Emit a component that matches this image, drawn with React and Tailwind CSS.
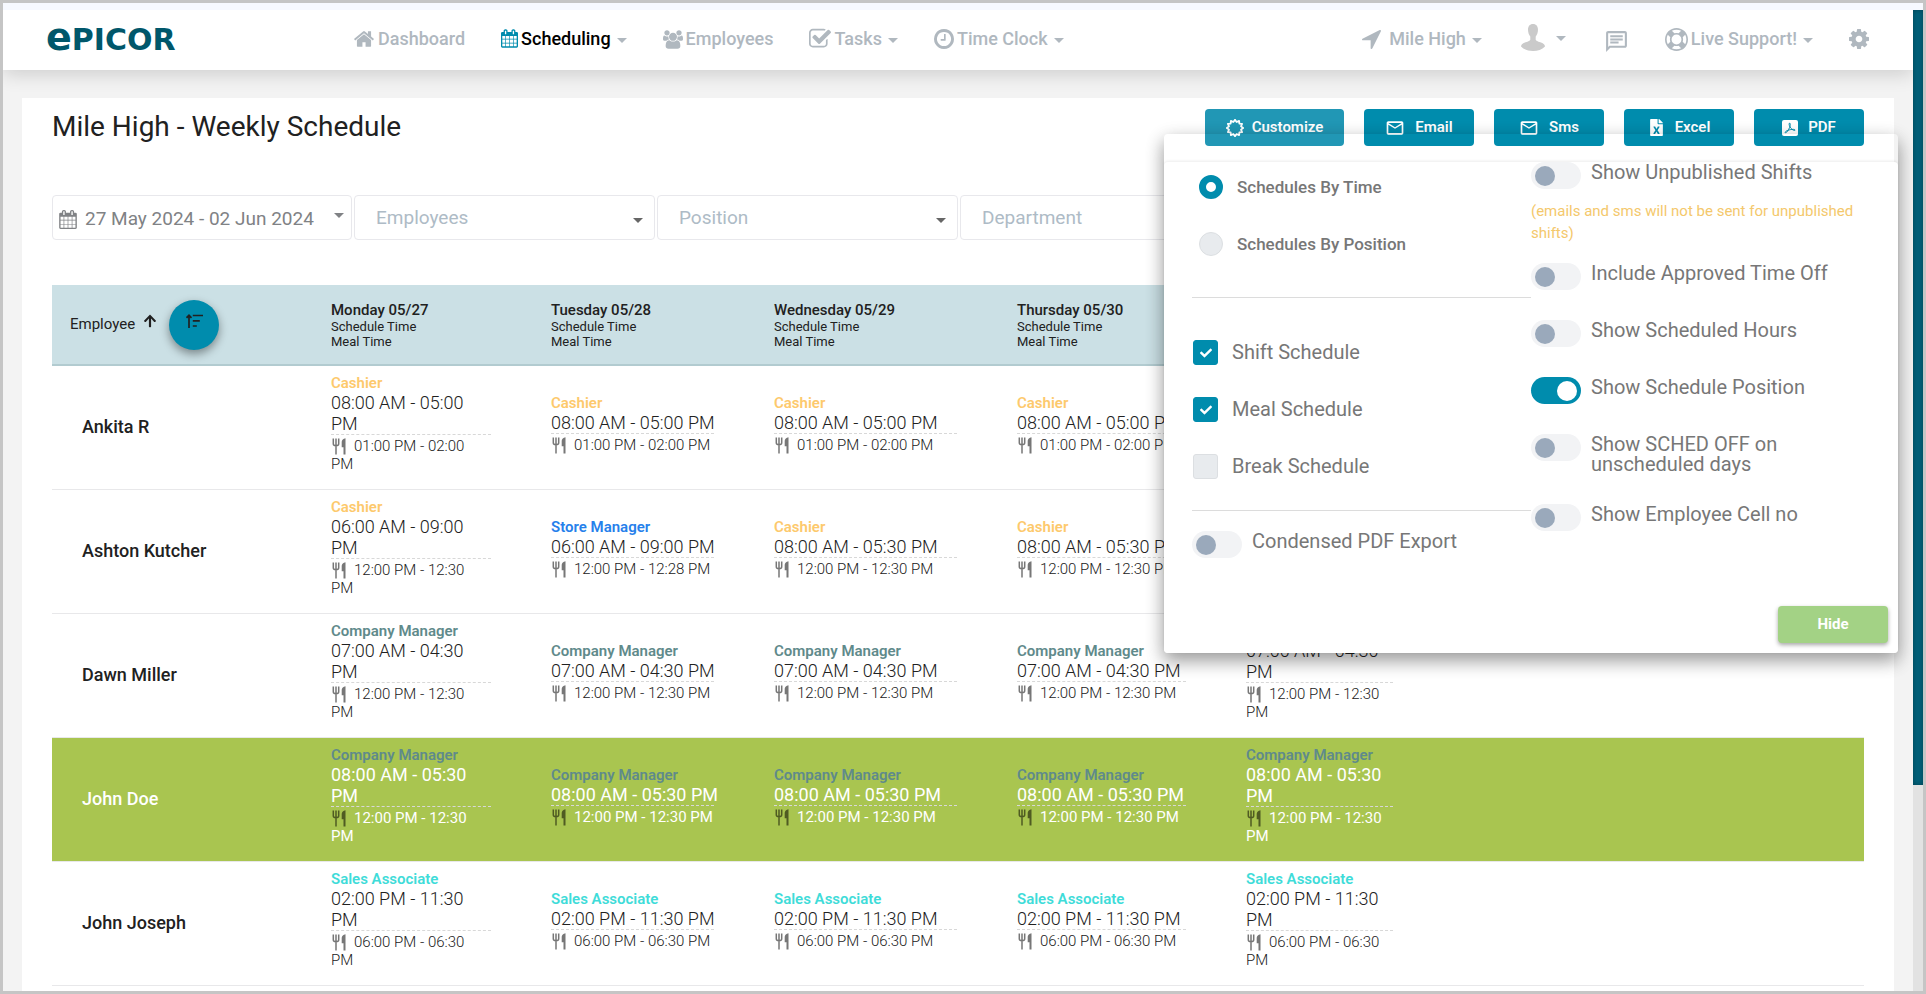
import { MdMailOutline, MdOutlineChat } from 'react-icons/md';
import { FaArrowUp, FaCheck, FaFileExcel } from 'react-icons/fa';

const ICONS = {
  home: {
    box: '0 0 1792 1792',
    d: 'M1472 992v480q0 26-19 45t-45 19h-384v-384h-256v384h-384q-26 0-45-19t-19-45v-480q0-1 .5-3t.5-3l575-474 575 474q1 2 1 6zm223-69l-62 74q-8 9-21 11h-3q-13 0-21-7l-692-577-692 577q-12 8-24 7-13-2-21-11l-62-74q-8-10-7-23.500t11-21.500l719-599q32-26 76-26t76 26l244 204v-195q0-14 9-23t23-9h192q14 0 23 9t9 23v408l219 182q10 8 11 21.500t-7 23.500z',
  },
  calendar: {
    box: '64 0 1664 1792',
    d: 'M192 1664h288v-288h-288v288zm352 0h320v-288h-320v288zm-352-352h288v-320h-288v320zm352 0h320v-320h-320v320zm-352-384h288v-288h-288v288zm736 736h320v-288h-320v288zm-384-736h320v-288h-320v288zm768 736h288v-288h-288v288zm-384-352h320v-320h-320v320zm-352-864v-288q0-13-9.500-22.500t-22.500-9.500h-64q-13 0-22.500 9.500t-9.500 22.500v288q0 13 9.500 22.500t22.500 9.500h64q13 0 22.500-9.500t9.500-22.500zm736 864h288v-320h-288v320zm-384-384h320v-288h-320v288zm384 0h288v-288h-288v288zm32-480v-288q0-13-9.500-22.500t-22.500-9.500h-64q-13 0-22.500 9.500t-9.500 22.500v288q0 13 9.500 22.500t22.500 9.500h64q13 0 22.500-9.500t9.500-22.500zm384-64v1280q0 52-38 90t-90 38h-1408q-52 0-90-38t-38-90v-1280q0-52 38-90t90-38h128v-96q0-66 47-113t113-47h64q66 0 113 47t47 113v96h384v-96q0-66 47-113t113-47h64q66 0 113 47t47 113v96h128q52 0 90 38t38 90z',
  },
  users: {
    box: '0 0 1920 1792',
    d: 'M593 896q-162 5-265 128h-134q-82 0-138-40.500t-56-118.500q0-353 124-353 6 0 43.500 21t97.500 42.500 119 21.500q67 0 133-23-5 37-5 66 0 139 81 256zm1071 637q0 120-73 189.500t-194 69.500h-874q-121 0-194-69.500t-73-189.500q0-53 3.500-103.500t14-109 26.500-108.500 43-97.500 62-81 85.500-53.500 111.500-20q10 0 43 21.500t73 48 107 48 135 21.500 135-21.500 107-48 73-48 43-21.500q61 0 111.500 20t85.500 53.500 62 81 43 97.500 26.500 108.500 14 109 3.500 103.500zm-1024-1277q0 106-75 181t-181 75-181-75-75-181 75-181 181-75 181 75 75 181zm704 384q0 159-112.500 271.500t-271.500 112.500-271.500-112.500-112.500-271.500 112.500-271.500 271.500-112.500 271.500 112.500 112.500 271.500zm576 225q0 78-56 118.500t-138 40.500h-134q-103-123-265-128 81-117 81-256 0-29-5-66 66 23 133 23 59 0 119-21.500t97.500-42.500 43.500-21q124 0 124 353zm-128-609q0 106-75 181t-181 75-181-75-75-181 75-181 181-75 181 75 75 181z',
  },
  check: {
    box: '64 64 1664 1664',
    d: 'M1472 930v318q0 119-84.500 203.500t-203.500 84.500h-832q-119 0-203.500-84.500t-84.500-203.500v-832q0-119 84.500-203.500t203.500-84.500h832q63 0 117 25 15 7 18 23 3 17-9 29l-49 49q-10 10-23 10-3 0-9-2-23-6-45-6h-832q-66 0-113 47t-47 113v832q0 66 47 113t113 47h832q66 0 113-47t47-113v-254q0-13 9-22l64-64q10-10 23-10 6 0 12 3 20 8 20 29zm231-489l-814 814q-24 24-57 24t-57-24l-430-430q-24-24-24-57t24-57l110-110q24-24 57-24t57 24l263 263 647-647q24-24 57-24t57 24l110 110q24 24 24 57t-24 57z',
  },
  clock: {
    box: '128 128 1536 1536',
    d: 'M1024 544v448q0 14-9 23t-23 9h-320q-14 0-23-9t-9-23v-64q0-14 9-23t23-9h224v-352q0-14 9-23t23-9h64q14 0 23 9t9 23zm416 352q0-148-73-273t-198-198-273-73-273 73-198 198-73 273 73 273 198 198 273 73 273-73 198-198 73-273zm224 0q0 209-103 385.500t-279.500 279.500-385.500 103-385.500-103-279.500-279.500-103-385.500 103-385.500 279.500-279.500 385.500-103 385.500 103 279.500 279.500 103 385.500z',
  },
  arrow: {
    box: '192 256 1408 1408',
    d: 'M1593 349l-640 1280q-17 35-57 35-5 0-15-2-22-5-35.500-22.500t-13.500-39.500v-576h-576q-22 0-39.500-13.500t-22.500-35.500 4-42 29-30l1280-640q13-7 29-7 27 0 45 19 15 14 18.500 34.500t-6.500 39.500z',
  },
  lifebuoy: {
    box: '0 0 1792 1792',
    d: 'M896 0q182 0 348 71t286 191 191 286 71 348-71 348-191 286-286 191-348 71-348-71-286-191-191-286-71-348 71-348 191-286 286-191 348-71zm0 128q-190 0-361 90l194 194q82-28 167-28t167 28l194-194q-171-90-361-90zm-678 1129l194-194q-28-82-28-167t28-167l-194-194q-90 171-90 361t90 361zm678 407q190 0 361-90l-194-194q-82 28-167 28t-167-28l-194 194q171 90 361 90zm0-384q159 0 271.500-112.500t112.500-271.500-112.500-271.500-271.500-112.500-271.500 112.500-112.500 271.500 112.500 271.500 271.500 112.500zm484-217l194 194q90-171 90-361t-90-361l-194 194q28 82 28 167t-28 167z',
  },
  cog: {
    box: '128 128 1536 1536',
    d: 'M1152 896q0-106-75-181t-181-75-181 75-75 181 75 181 181 75 181-75 75-181zm512-109v222q0 12-8 23t-20 13l-185 28q-19 54-39 91 35 50 107 138 10 12 10 25t-9 23q-27 37-99 108t-94 71q-12 0-26-9l-138-108q-44 23-91 38-16 136-29 186-7 28-36 28h-222q-14 0-24.500-8.500t-11.500-21.500l-28-184q-49-16-90-37l-141 107q-10 9-25 9-14 0-25-11-126-114-165-168-7-10-7-23 0-12 8-23 15-21 51-66.500t54-70.500q-27-50-41-99l-183-27q-13-2-21-12.500t-8-23.500v-222q0-12 8-23t19-13l186-28q14-46 39-92-40-57-107-138-10-12-10-24 0-10 9-23 26-36 98.500-107.500t94.500-71.500q13 0 26 10l138 107q44-23 91-38 16-136 29-186 7-28 36-28h222q14 0 24.500 8.500t11.500 21.500l28 184q49 16 90 37l142-107q9-9 24-9 13 0 25 10 129 119 165 170 7 8 7 22 0 12-8 23-15 21-51 66.500t-54 70.500q26 50 41 98l183 28q13 2 21 12.500t8 23.500z',
  },
};

function Icon({ name, className }) {
  const { box, d } = ICONS[name];
  return (
    <svg viewBox={box} className={className} fill="currentColor" aria-hidden="true">
      <path d={d} />
    </svg>
  );
}

function Caret({ className = '' }) {
  return (
    <svg viewBox="0 0 10 5" className={`w-[10px] h-[5px] shrink-0 ${className}`} fill="currentColor" aria-hidden="true">
      <path d="M0 0h10L5 5z" />
    </svg>
  );
}

function Cutlery({ className = '' }) {
  return (
    <svg viewBox="0 0 16 17" className={`inline-block w-4 h-[17px] mr-[7px] align-bottom ${className}`} aria-hidden="true">
      <path d="M2.3 0.5v5.2q0 2 2.7 2t2.700-2V0.500M5 0.500v16" fill="none" stroke="currentColor" strokeWidth="1.500" />
      <path d="M14.500 0.300v16.200h-2V9.300h-1.800V3.800Q11 0.800 14.500 0.300z" fill="currentColor" />
    </svg>
  );
}

// scalloped ring on the Customize button
const BURST = Array.from({ length: 24 }, (_, i) => {
  const r = i % 2 ? 7.6 : 10;
  const a = (i * Math.PI) / 12;
  return `${(12 + r * Math.sin(a)).toFixed(2)},${(12 - r * Math.cos(a)).toFixed(2)}`;
}).join(' ');

function BurstIcon() {
  return (
    <svg viewBox="1 1 22 22" className="size-[18px]" fill="none" stroke="currentColor" strokeWidth="2.2" strokeLinejoin="round" aria-hidden="true">
      <polygon points={BURST} />
    </svg>
  );
}

function PdfIcon() {
  return (
    <svg viewBox="0 0 16 16" className="size-4" aria-hidden="true">
      <rect width="16" height="16" rx="2" fill="#fff" />
      <path
        d="M7.300 3.200c1.300-.5 1.200 2.300.3 4.300C6.500 10 4.700 13 3.400 12.800c-1.200-.6 1.600-2.500 4.200-3 2.600-.6 5.600-.7 5.500.3-.3 1-2.700-.2-4-1.700C7.600 6.800 6.700 4.300 7.300 3.200z"
        fill="none"
        stroke="#008cad"
        strokeWidth="1"
      />
    </svg>
  );
}

function Avatar() {
  return (
    <svg viewBox="0 0 26 28" className="w-[26px] h-7" fill="#cacaca" aria-hidden="true">
      <path d="M13 1c3.300 0 5 2.300 5 5.800 0 3-1.100 5.300-2.300 6.600v3.400c.3 1.200 2 1.600 4.600 2.500 3 1 4.500 2.200 4.700 4.200C22 26.500 17.800 28 13 28S4 26.500 1 23.500c.2-2 1.700-3.200 4.700-4.200 2.600-.9 4.300-1.300 4.600-2.500v-3.400C9.100 12.100 8 9.800 8 6.800 8 3.300 9.700 1 13 1z" />
    </svg>
  );
}

function NavLink({ icon, iconClass, label, caret, active }) {
  return (
    <a href="#" className={`flex items-center text-lg font-medium ${active ? 'text-black' : 'text-[#b0b8bf]'}`}>
      <Icon name={icon} className={iconClass} />
      {label}
      {caret && <Caret className="ml-1.5 mt-0.5 text-[#b0b8bf]" />}
    </a>
  );
}

function Header() {
  return (
    <header className="relative z-10 flex h-[60px] shrink-0 items-center bg-white pb-0.5 pl-[43px] pr-11 shadow-[0_4px_18px_rgba(0,0,0,0.16)]">
      <a href="#" className="flex w-[307px] items-baseline pb-1 font-['DejaVu_Sans'] font-bold leading-none text-[#00576b]">
        <span className="text-[38px] leading-none">e</span>
        <span className="text-[30px] leading-none">PICOR</span>
      </a>
      <nav className="flex items-center gap-9">
        <NavLink icon="home" iconClass="mr-[3px] size-[22px]" label="Dashboard" />
        <NavLink icon="calendar" iconClass="mr-[3px] mb-0.5 w-[17px] h-[19px] text-[#008cad]" label="Scheduling" caret active />
        <NavLink icon="users" iconClass="mr-[3px] w-5 h-[19px]" label="Employees" />
        <NavLink icon="check" iconClass="mr-[3px] size-[22px]" label="Tasks" caret />
        <NavLink icon="clock" iconClass="mr-[3px] size-5" label="Time Clock" caret />
      </nav>
      <div className="ml-auto flex items-center gap-9">
        <NavLink icon="arrow" iconClass="mr-2 size-[19px]" label="Mile High" caret />
        <button type="button" aria-label="Account" className="flex items-center gap-2.5 pb-1 px-0.5 text-[#b0b8bf]">
          <Avatar />
          <Caret className="mt-0.5" />
        </button>
        <button type="button" aria-label="Messages" className="pt-1 text-[#b0b8bf]">
          <MdOutlineChat className="size-[25px]" />
        </button>
        <NavLink icon="lifebuoy" iconClass="mr-[3px] size-[23px]" label="Live Support!" caret />
        <button type="button" aria-label="Settings" className="text-[#b0b8bf]">
          <Icon name="cog" className="size-5" />
        </button>
      </div>
    </header>
  );
}

function ToolButton({ icon, children, wide, light }) {
  return (
    <button
      type="button"
      className={`flex h-[37px] items-center justify-center rounded text-[15px] font-semibold text-white ${wide ? 'w-[139px] gap-2' : 'w-[110px] gap-2.5'} ${light ? 'bg-[#2197b5]' : 'bg-[#008cad]'}`}
    >
      {icon}
      {children}
    </button>
  );
}

function Toggle({ label, checked }) {
  return (
    <label className="flex items-start gap-2.5 text-xl leading-5 text-[#777]">
      <input
        type="checkbox"
        defaultChecked={checked}
        className="flex h-[27px] w-[50px] shrink-0 appearance-none items-center rounded-full bg-[#f2f3f5] px-1 before:size-5 before:rounded-full before:bg-[#9aa9bb] before:content-[''] checked:bg-[#008cad] checked:before:ml-auto checked:before:bg-white"
      />
      <span className="whitespace-pre-line">{label}</span>
    </label>
  );
}

function Radio({ label, checked }) {
  return (
    <label className="flex items-center gap-3.5 text-[17px] font-medium leading-6 text-[#777]">
      <input
        type="radio"
        name="group-by"
        defaultChecked={checked}
        className="size-6 shrink-0 appearance-none rounded-full border border-[#dcdfe2] bg-[#e8ebee] checked:border-[7px] checked:border-[#008cad] checked:bg-white"
      />
      {label}
    </label>
  );
}

function Check({ label, checked }) {
  return (
    <label className="flex items-center gap-3.5 text-xl leading-[25px] text-[#777]">
      <span className="relative size-[25px] shrink-0">
        <input
          type="checkbox"
          defaultChecked={checked}
          className="peer block size-[25px] appearance-none rounded-[3px] border border-[#dcdfe2] bg-[#e8ebee] checked:border-[#008cad] checked:bg-[#008cad]"
        />
        <FaCheck className="pointer-events-none absolute inset-0 m-auto hidden size-3 text-white peer-checked:block" />
      </span>
      {label}
    </label>
  );
}

function CustomizePanel() {
  return (
    <div className="pointer-events-none absolute -right-[34px] top-[25px] z-20 w-[734px] rounded pt-7 shadow-[0_8px_17px_rgba(0,0,0,0.25),0_6px_20px_rgba(0,0,0,0.2)]">
      <div className="pointer-events-auto rounded bg-white pb-2.5 shadow-[0_-1px_3px_rgba(0,0,0,0.08)]">
        <div className="grid grid-cols-2 px-7">
          <div>
            <div className="flex flex-col gap-[33px] border-b border-[#dcdcdc] pb-[41px] pl-[7px] pt-[13px]">
              <Radio label="Schedules By Time" checked />
              <Radio label="Schedules By Position" />
            </div>
            <div className="flex flex-col gap-8 border-b border-[#dcdcdc] pb-[31px] pl-px pt-[42px]">
              <Check label="Shift Schedule" checked />
              <Check label="Meal Schedule" checked />
              <Check label="Break Schedule" />
            </div>
            <div className="pt-5">
              <Toggle label="Condensed PDF Export" />
            </div>
          </div>
          <div className="flex flex-col gap-[30px]">
            <div>
              <Toggle label="Show Unpublished Shifts" />
              <p className="mb-[-11px] mt-[11px] text-[15px] leading-[22px] text-[#f4c86c]">
                (emails and sms will not be sent for unpublished shifts)
              </p>
            </div>
            <Toggle label="Include Approved Time Off" />
            <Toggle label="Show Scheduled Hours" />
            <Toggle label="Show Schedule Position" checked />
            <Toggle label={'Show SCHED OFF on\nunscheduled days'} />
            <Toggle label="Show Employee Cell no" />
          </div>
        </div>
        <div className="flex justify-end pr-2.5 pt-12">
          <button
            type="button"
            className="h-[37px] w-[110px] rounded bg-[#a3d285] text-[15px] font-bold text-white shadow-[0_2px_4px_rgba(0,0,0,0.35)]"
          >
            Hide
          </button>
        </div>
      </div>
    </div>
  );
}

function FilterSelect({ label }) {
  return (
    <div className="relative w-[301px] shrink-0">
      <select
        aria-label={label}
        className="h-[45px] w-full appearance-none rounded border border-[#e8e8ec] bg-white pl-[21px] pt-0.5 text-[19px] text-[#aebbc6]"
      >
        <option>{label}</option>
      </select>
      <Caret className="pointer-events-none absolute bottom-[17px] right-3 w-3 h-1.5 text-[#666]" />
    </div>
  );
}

const ROLE_COLORS = {
  Cashier: 'text-[#fdc96c]',
  'Store Manager': 'text-[#2680eb]',
  'Company Manager': 'text-[#5f8a8b]',
  'Sales Associate': 'text-[#3fdcd9]',
};

const DAYS = ['Monday 05/27', 'Tuesday 05/28', 'Wednesday 05/29', 'Thursday 05/30'];

const NARROW = [0, 4];

const cashier = { role: 'Cashier', shift: '08:00 AM - 05:00 PM', meal: '01:00 PM - 02:00 PM' };
const cashierLate = { role: 'Cashier', shift: '08:00 AM - 05:30 PM', meal: '12:00 PM - 12:30 PM' };
const dawn = { role: 'Company Manager', shift: '07:00 AM - 04:30 PM', meal: '12:00 PM - 12:30 PM' };
const john = { role: 'Company Manager', shift: '08:00 AM - 05:30 PM', meal: '12:00 PM - 12:30 PM' };
const joseph = { role: 'Sales Associate', shift: '02:00 PM - 11:30 PM', meal: '06:00 PM - 06:30 PM' };

const ROWS = [
  { name: 'Ankita R', shifts: [cashier, cashier, cashier, cashier, null] },
  {
    name: 'Ashton Kutcher',
    shifts: [
      { role: 'Cashier', shift: '06:00 AM - 09:00 PM', meal: '12:00 PM - 12:30 PM' },
      { role: 'Store Manager', shift: '06:00 AM - 09:00 PM', meal: '12:00 PM - 12:28 PM' },
      cashierLate,
      cashierLate,
      null,
    ],
  },
  { name: 'Dawn Miller', shifts: [dawn, dawn, dawn, dawn, dawn] },
  { name: 'John Doe', highlight: true, shifts: [john, john, john, john, john] },
  { name: 'John Joseph', shifts: [joseph, joseph, joseph, joseph, joseph] },
];

function Shift({ role, shift, meal, highlight, narrow }) {
  return (
    <div className={narrow ? '' : 'whitespace-nowrap'}>
      <div className={`text-[15px] font-semibold leading-[18px] ${ROLE_COLORS[role]}`}>{role}</div>
      <div className="border-b border-dashed border-[#d8d8d8] text-lg leading-[21px]">{shift}</div>
      <div className={`pt-0.5 text-[15px] leading-[18px] ${narrow ? 'pr-[7px]' : ''}`}>
        <Cutlery className={highlight ? 'text-[#4f5b22]' : 'text-[#777]'} />
        {meal}
      </div>
    </div>
  );
}

function ScheduleTable() {
  return (
    <table className="w-full table-fixed border-collapse text-left text-[#212121]">
      <colgroup>
        <col className="w-[249px]" />
        <col className="w-[220px]" />
        <col className="w-[223px]" />
        <col className="w-[243px]" />
        <col className="w-[229px]" />
        <col className="w-[207px]" />
        <col />
      </colgroup>
      <thead>
        <tr className="h-[80px] border-b-2 border-[#b2cbd0] bg-[#cbe0e5]">
          <th className="pl-[18px] text-[15px] font-normal">
            <span className="flex items-center">
              Employee
              <FaArrowUp className="mb-2 ml-2 size-[14px]" />
              <button
                type="button"
                aria-label="Sort"
                className="ml-3 flex size-[50px] items-center justify-center rounded-full bg-[#008cad] pb-2 shadow-[0_4px_10px_rgba(0,0,0,0.4)]"
              >
                <svg viewBox="0 0 17 14" className="h-[14px] w-[17px]" fill="none" stroke="currentColor" strokeWidth="1.700" aria-hidden="true">
                  <path d="M3 14V1.500M0.500 3.800L3 1.300l2.500 2.500M6.800 1.500H17M6.800 6.800h7M6.800 12h4" />
                </svg>
              </button>
            </span>
          </th>
          {DAYS.map((day) => (
            <th key={day} className="px-[30px] font-normal">
              <div className="text-[15px] font-medium leading-[18px]">{day}</div>
              <div className="text-[13px] leading-[15px]">Schedule Time</div>
              <div className="text-[13px] leading-[15px]">Meal Time</div>
            </th>
          ))}
          <th />
          <th />
        </tr>
      </thead>
      <tbody>
        {ROWS.map(({ name, highlight, shifts }) => (
          <tr
            key={name}
            className={`h-[124px] border-b border-[#e8e8ea] ${highlight ? 'bg-[#a9c550] text-white' : 'font-light'}`}
          >
            <th className="pl-[30px] text-lg font-medium">{name}</th>
            {shifts.map((s, i) => (
              <td key={i} className="px-[30px] pb-[7px]">
                {s && <Shift {...s} highlight={highlight} narrow={NARROW.includes(i)} />}
              </td>
            ))}
            <td />
          </tr>
        ))}
      </tbody>
    </table>
  );
}

export default function App() {
  return (
    <div className="flex h-screen flex-col overflow-hidden border-[3px] border-[#c5c5c5] bg-[#f3f3f3] font-['Roboto',sans-serif]">
      <div className="h-[7px] shrink-0 bg-[#f7f9ff]" />
      <div className="flex min-h-0 flex-1">
        <div className="flex min-w-0 flex-1 flex-col overflow-hidden">
          <Header />
          <main className="mx-[19px] mt-7 flex-1 bg-white px-[30px] pt-[11px]">
            <div className="relative flex items-start justify-between">
              <h1 className="pt-0.5 text-[28px] leading-8 text-[#212121]">Mile High - Weekly Schedule</h1>
              <div className="flex gap-5">
                <ToolButton icon={<BurstIcon />} wide light>Customize</ToolButton>
                <ToolButton icon={<MdMailOutline className="size-5" />}>Email</ToolButton>
                <ToolButton icon={<MdMailOutline className="size-5" />}>Sms</ToolButton>
                <ToolButton icon={<FaFileExcel className="size-[17px]" />}>Excel</ToolButton>
                <ToolButton icon={<PdfIcon />}>PDF</ToolButton>
              </div>
              <CustomizePanel />
            </div>
            <div className="mb-[45px] mt-[49px] flex gap-0.5">
              <button
                type="button"
                className="flex h-[45px] w-[300px] shrink-0 items-center rounded border border-[#e8e8ec] pl-1.5 pr-[7px] text-[19px] text-[#808285]"
              >
                <Icon name="calendar" className="mr-2 mt-1 h-[19px] w-[18px]" />
                <span className="pt-1">27 May 2024 - 02 Jun 2024</span>
                <Caret className="mb-1 ml-auto" />
              </button>
              <FilterSelect label="Employees" />
              <FilterSelect label="Position" />
              <FilterSelect label="Department" />
            </div>
            <ScheduleTable />
          </main>
        </div>
        <div className="w-[10px] shrink-0 bg-[#e2e2e2]">
          <div className="h-[79%] bg-[#006079] shadow-[inset_0_0_5px_rgba(0,0,0,0.3)]" />
        </div>
      </div>
    </div>
  );
}
